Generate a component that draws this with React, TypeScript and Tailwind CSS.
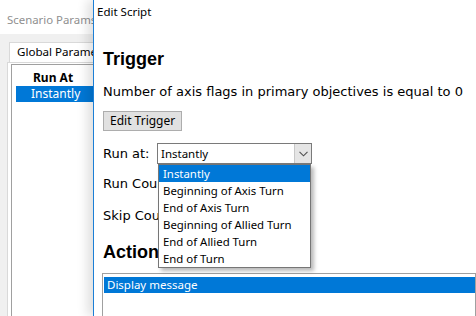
import React from 'react';

const ui = "font-['Noto_Sans',sans-serif]";
const tah = "font-['DejaVu_Sans',sans-serif]";

const runAtOptions = [
    'Instantly',
    'Beginning of Axis Turn',
    'End of Axis Turn',
    'Beginning of Allied Turn',
    'End of Allied Turn',
    'End of Turn',
];

const Chevron: React.FC = () => (
    <svg width="9" height="6" viewBox="0 0 9 6" fill="none">
        <path d="M0.5 0.8 L4.5 4.8 L8.5 0.8" stroke="#505050" strokeWidth="1.1" />
    </svg>
);

const ScenarioParams: React.FC = () => {
    return (
        <div className="w-[93px] shrink-0 flex flex-col bg-[#f0f0f0] overflow-hidden">
            <div className={`h-[34px] bg-white pl-[7px] pt-[12px] text-[11.4px] leading-[16px] text-[#8f8f8f] whitespace-nowrap overflow-hidden ${ui}`}>
                Scenario Params
            </div>
            <div className="h-[8px]" />
            <div className={`ml-[9px] h-[20px] w-[84px] overflow-hidden border-l border-t border-[#d9d9d9] bg-white pl-[7px] text-[11.6px] leading-[18px] text-black whitespace-nowrap ${ui}`}>
                Global Parameters
            </div>
            <div className="ml-[7px] flex-1 border-l border-t border-[#d9d9d9] bg-white pl-[3px] pt-[1px]">
                <div className={`h-full border-l border-t border-[#a0a0a0] pt-[4px] pl-[4px] text-[12px] whitespace-nowrap ${ui}`}>
                    <div className="pl-[17px] font-bold leading-[17px] text-black">Run At</div>
                    <div className="h-[16px] bg-[#0078d7] pl-[15px] leading-[16px] text-white">Instantly</div>
                </div>
            </div>
        </div>
    );
};

const EditScript: React.FC = () => {
    return (
        <div className="relative flex-1 flex flex-col bg-white border-l border-[#1c7fd6] shadow-[-6px_0_10px_rgba(0,0,0,0.12)] overflow-hidden">
            <div className={`h-[25px] pl-[3px] pt-[4px] text-[11.5px] leading-[16px] text-black ${ui}`}>Edit Script</div>
            <div className="flex flex-col pl-[9px]">
                <div className="mt-[28px] font-['Liberation_Sans',sans-serif] font-bold text-[18px] leading-[22px] text-black">
                    Trigger
                </div>
                <div className={`mt-[14px] text-[13px] leading-[16px] text-black whitespace-nowrap ${tah}`}>
                    Number of axis flags in primary objectives is equal to 0
                </div>
                <div className="mt-[7px]">
                    <button className={`h-[20px] px-[6px] border border-[#adadad] bg-[#e1e1e1] text-[12px] leading-[18px] text-black ${ui}`}>
                        Edit Trigger
                    </button>
                </div>
                <div className="mt-[12px] flex items-center h-[21px]">
                    <div className={`w-[54px] text-[13px] text-black ${tah}`}>Run at:</div>
                    <div className="relative">
                        <div className="flex h-[21px] w-[155px] border border-[#7a7a7a] bg-white">
                            <div className={`flex-1 pl-[3px] text-[11.5px] leading-[19px] text-black ${ui}`}>Instantly</div>
                            <div className="flex w-[17px] items-center justify-center border-l border-[#c8c8c8] bg-[#e5e5e5]">
                                <Chevron />
                            </div>
                        </div>
                        <div className="absolute left-[1px] top-[21px] z-10 w-[153px] border border-[#767676] bg-white shadow-[3px_3px_4px_rgba(0,0,0,0.28)]">
                            {runAtOptions.map((opt, i) => (
                                <div
                                    key={opt}
                                    className={`h-[17px] pl-[4px] text-[11.4px] leading-[17px] whitespace-nowrap ${ui} ${i === 0 ? 'bg-[#0078d7] text-white' : 'text-black'}`}
                                >
                                    {opt}
                                </div>
                            ))}
                        </div>
                    </div>
                </div>
                <div className={`mt-[10px] h-[20px] text-[13px] leading-[20px] text-black whitespace-nowrap ${tah}`}>Run Count:</div>
                <div className={`mt-[12px] h-[20px] text-[13px] leading-[20px] text-black whitespace-nowrap ${tah}`}>Skip Count:</div>
                <div className="mt-[15px] font-['Liberation_Sans',sans-serif] font-bold text-[18px] leading-[22px] text-black">
                    Actions
                </div>
                <div className="mt-[10px] -ml-[1px] h-[60px] border border-[#a0a0a0] pl-[1px] pt-[3px] pr-0">
                    <div className={`h-[16px] bg-[#0078d7] pl-[3px] text-[11.5px] leading-[16px] text-white ${ui}`}>Display message</div>
                </div>
            </div>
        </div>
    );
};

const App: React.FC = () => {
    return (
        <div className="flex h-[316px] w-[476px] overflow-hidden bg-[#f0f0f0]">
            <ScenarioParams />
            <EditScript />
        </div>
    );
};

export default App;
